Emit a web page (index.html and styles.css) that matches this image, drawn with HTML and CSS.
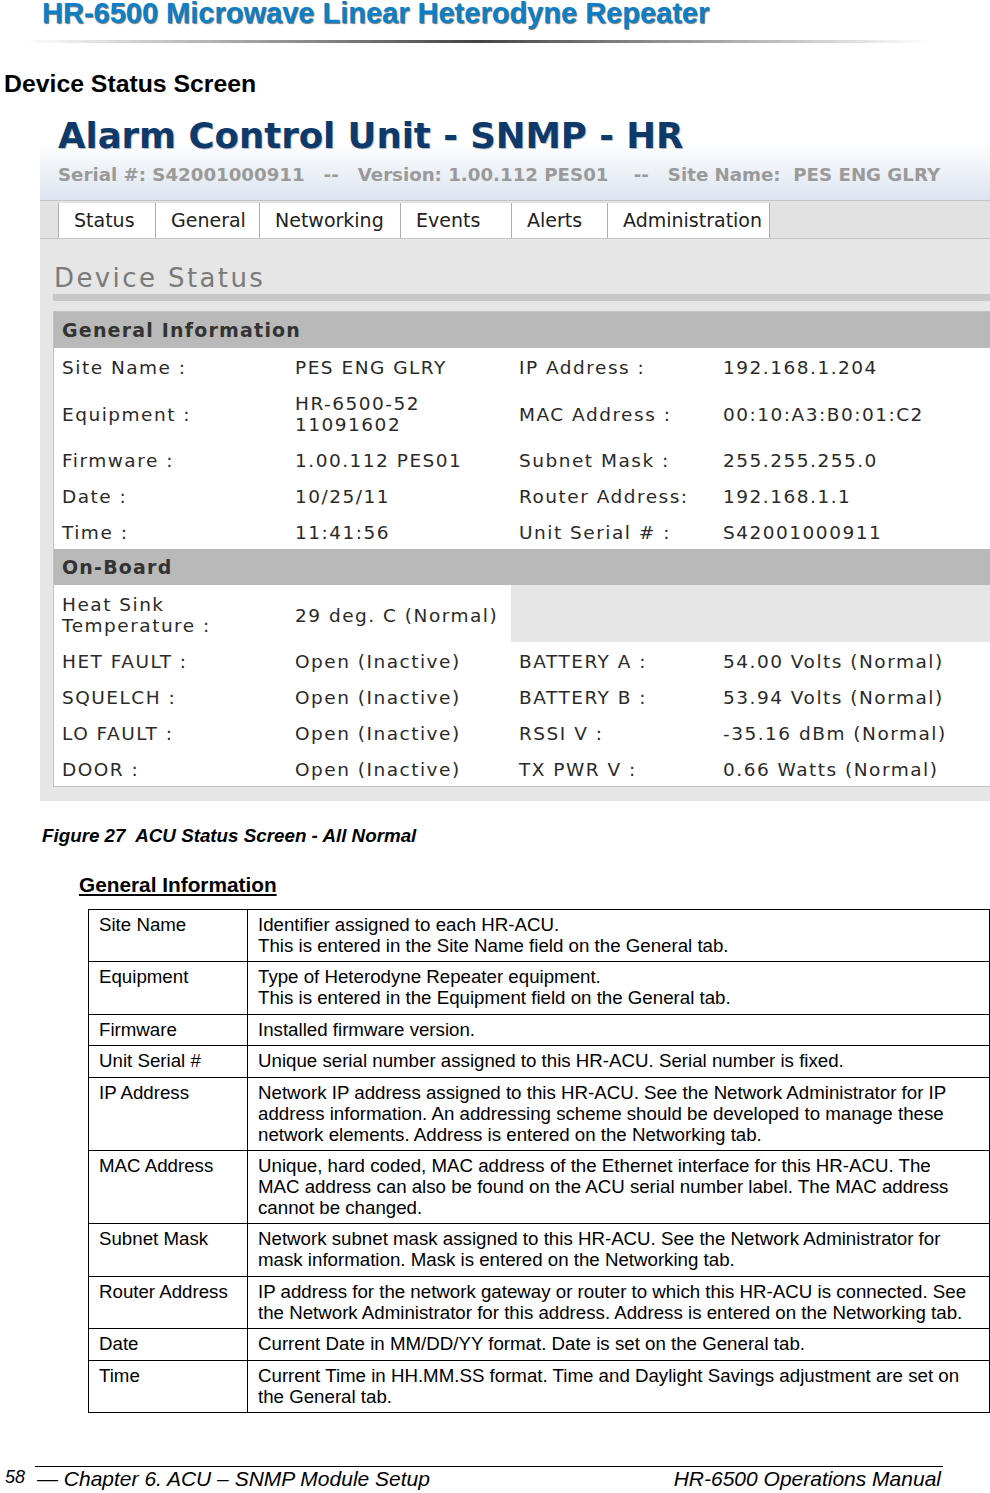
FILE: index.html
```html
<!DOCTYPE html>
<html lang="en">
<head>
    <meta charset="UTF-8">
    <meta name="viewport" content="width=device-width, initial-scale=1.0">
    <title>Device Status Screen</title>
    <link rel="stylesheet" href="styles.css">
</head>
<body>

<div class="page">
    <div class="doc-title">HR-6500 Microwave Linear Heterodyne Repeater</div>
    <div class="doc-rule"></div>

    <h1 class="section-title">Device Status Screen</h1>

    <!-- Screenshot of the ACU web page -->
    <div class="screen">
        <div class="acu-head">
            <div class="acu-title">Alarm Control Unit - SNMP - HR</div>
            <div class="acu-sub">Serial #: S42001000911   --   Version: 1.00.112 PES01    --   Site Name:  PES ENG GLRY</div>
        </div>

        <div class="tabs">
            <div class="tab">Status</div>
            <div class="tab">General</div>
            <div class="tab">Networking</div>
            <div class="tab">Events</div>
            <div class="tab">Alerts</div>
            <div class="tab">Administration</div>
        </div>

        <div class="status-body">
            <div class="status-title">Device Status</div>
            <div class="status-rule"></div>

            <div class="panel">
                <div class="panel-head">General Information</div>
                <div class="grid">
                    <div class="cell">Site Name :</div>
                    <div class="cell">PES ENG GLRY</div>
                    <div class="cell">IP Address :</div>
                    <div class="cell">192.168.1.204</div>

                    <div class="cell">Equipment :</div>
                    <div class="cell">HR-6500-52<br>11091602</div>
                    <div class="cell">MAC Address :</div>
                    <div class="cell">00:10:A3:B0:01:C2</div>

                    <div class="cell">Firmware :</div>
                    <div class="cell">1.00.112 PES01</div>
                    <div class="cell">Subnet Mask :</div>
                    <div class="cell">255.255.255.0</div>

                    <div class="cell">Date :</div>
                    <div class="cell">10/25/11</div>
                    <div class="cell">Router Address:</div>
                    <div class="cell">192.168.1.1</div>

                    <div class="cell">Time :</div>
                    <div class="cell">11:41:56</div>
                    <div class="cell">Unit Serial # :</div>
                    <div class="cell">S42001000911</div>
                </div>

                <div class="panel-head">On-Board</div>
                <div class="grid">
                    <div class="cell">Heat Sink<br>Temperature :</div>
                    <div class="cell">29 deg. C (Normal)</div>
                    <div class="cell empty"></div>
                    <div class="cell empty"></div>

                    <div class="cell">HET FAULT :</div>
                    <div class="cell">Open (Inactive)</div>
                    <div class="cell">BATTERY A :</div>
                    <div class="cell">54.00 Volts (Normal)</div>

                    <div class="cell">SQUELCH :</div>
                    <div class="cell">Open (Inactive)</div>
                    <div class="cell">BATTERY B :</div>
                    <div class="cell">53.94 Volts (Normal)</div>

                    <div class="cell">LO FAULT :</div>
                    <div class="cell">Open (Inactive)</div>
                    <div class="cell">RSSI V :</div>
                    <div class="cell">-35.16 dBm (Normal)</div>

                    <div class="cell">DOOR :</div>
                    <div class="cell">Open (Inactive)</div>
                    <div class="cell">TX PWR V :</div>
                    <div class="cell">0.66 Watts (Normal)</div>
                </div>
            </div>
        </div>
    </div>

    <p class="caption">Figure 27&nbsp; ACU Status Screen - All Normal</p>

    <h2 class="sub-title">General Information</h2>

    <table class="info">
        <tr>
            <td>Site Name</td>
            <td>Identifier assigned to each HR-ACU.<br>This is entered in the Site Name field on the General tab.</td>
        </tr>
        <tr>
            <td>Equipment</td>
            <td>Type of Heterodyne Repeater equipment.<br>This is entered in the Equipment field on the General tab.</td>
        </tr>
        <tr>
            <td>Firmware</td>
            <td>Installed firmware version.</td>
        </tr>
        <tr>
            <td>Unit Serial #</td>
            <td>Unique serial number assigned to this HR-ACU. Serial number is fixed.</td>
        </tr>
        <tr>
            <td>IP Address</td>
            <td>Network IP address assigned to this HR-ACU. See the Network Administrator for IP<br>address information. An addressing scheme should be developed to manage these<br>network elements. Address is entered on the Networking tab.</td>
        </tr>
        <tr>
            <td>MAC Address</td>
            <td>Unique, hard coded, MAC address of the Ethernet interface for this HR-ACU. The<br>MAC address can also be found on the ACU serial number label. The MAC address<br>cannot be changed.</td>
        </tr>
        <tr>
            <td>Subnet Mask</td>
            <td>Network subnet mask assigned to this HR-ACU. See the Network Administrator for<br>mask information. Mask is entered on the Networking tab.</td>
        </tr>
        <tr>
            <td>Router Address</td>
            <td>IP address for the network gateway or router to which this HR-ACU is connected. See<br>the Network Administrator for this address. Address is entered on the Networking tab.</td>
        </tr>
        <tr>
            <td>Date</td>
            <td>Current Date in MM/DD/YY format. Date is set on the General tab.</td>
        </tr>
        <tr>
            <td>Time</td>
            <td>Current Time in HH.MM.SS format. Time and Daylight Savings adjustment are set on<br>the General tab.</td>
        </tr>
    </table>

    <div class="footer">
        <span class="page-num">58</span>
        <div class="footer-line">
            <span>&mdash; Chapter 6. ACU &ndash; SNMP Module Setup</span>
            <span>HR-6500 Operations Manual</span>
        </div>
    </div>
</div>

</body>
</html>
```

FILE: styles.css
```css
body {
    margin: 0;
    padding: 0;
    background-color: #ffffff;
    font-family: "Liberation Sans", Arial, sans-serif;
    color: #000;
}
.page {
    width: 990px;
    overflow: hidden;
}

/* Manual header */
.doc-title {
    margin: 0 0 0 42px;
    font-size: 29px;
    line-height: 27px;
    font-weight: bold;
    color: #0b80c8;
    text-shadow: 1px 1px 1px #777;
}
.doc-rule {
    height: 3px;
    margin: 13px 60px 0 25px;
    background: linear-gradient(to right, rgba(60,60,60,0), #444 50%, rgba(60,60,60,0));
}
.section-title {
    margin: 27px 0 0 4px;
    font-size: 24.8px;
    line-height: 28px;
    font-weight: bold;
}

/* ACU screenshot */
.screen {
    margin: 12px 0 0 40px;
    font-family: "DejaVu Sans", Verdana, sans-serif;
    overflow: hidden;
}
.acu-head {
    padding: 6px 0 13px 18px;
    background: linear-gradient(#ffffff 35%, #dbe4ef);
}
.acu-title {
    font-size: 35.5px;
    line-height: 40px;
    font-weight: bold;
    color: #0d3a6b;
    text-shadow: 1px 1px 0 rgba(0,0,0,0.25);
}
.acu-sub {
    margin-top: 7px;
    font-size: 18.2px;
    line-height: 24px;
    font-weight: bold;
    color: #9a9a9a;
    white-space: pre;
}
.tabs {
    display: grid;
    grid-template-columns: 97px 104px 141px 111px 96px 163px;
    padding: 2px 0 0 18px;
    background-color: #e2e2e2;
    border-top: 1px solid #c4c4c4;
    border-bottom: 1px solid #c4c4c4;
}
.tab {
    background-color: #ffffff;
    border-left: 1px solid #b0b0b0;
    padding-left: 15px;
    font-size: 19px;
    line-height: 35px;
    color: #222;
}
.tab:last-child {
    border-right: 1px solid #b0b0b0;
}
.status-body {
    background-color: #e6e6e6;
    padding: 23px 0 14px 13px;
}
.status-title {
    padding-left: 1px;
    font-size: 26px;
    line-height: 32px;
    letter-spacing: 2.4px;
    color: #7a7a7a;
}
.status-rule {
    height: 7px;
    background-color: #c8c8c8;
}
.panel {
    margin-top: 10px;
    border: 1px solid #c2c2c2;
    border-right: none;
    background-color: #ffffff;
}
.panel-head {
    padding-left: 8px;
    background-color: #b9b9b9;
    font-size: 19px;
    line-height: 36px;
    font-weight: bold;
    letter-spacing: 1.2px;
    color: #333;
}
.grid {
    display: grid;
    grid-template-columns: 233px 224px 204px 1fr;
    align-items: center;
}
.cell {
    padding: 9px 0 6px 8px;
    font-size: 18.5px;
    line-height: 21px;
    letter-spacing: 1.5px;
    color: #2a2a2a;
    white-space: nowrap;
}
.cell.empty {
    align-self: stretch;
    background-color: #e6e6e6;
}

/* Manual text */
.caption {
    margin: 24px 0 0 42px;
    font-size: 18.8px;
    line-height: 22px;
    font-weight: bold;
    font-style: italic;
}
.sub-title {
    margin: 26px 0 0 79px;
    font-size: 20.8px;
    line-height: 24px;
    font-weight: bold;
    text-decoration: underline;
}
.info {
    margin: 12px 0 0 88px;
    width: 902px;
    border-collapse: collapse;
    font-size: 18.7px;
    line-height: 21px;
}
.info td {
    border: 1px solid #000;
    padding: 4px 10px 5.4px 10px;
    vertical-align: top;
    white-space: nowrap;
}
.info td:first-child {
    width: 138px;
}

/* Footer */
.footer {
    display: flex;
    align-items: flex-start;
    margin-top: 53px;
    padding-left: 5px;
    font-style: italic;
}
.page-num {
    width: 30px;
    margin-top: 1px;
    font-size: 18px;
    line-height: 20px;
}
.footer-line {
    flex: 1;
    display: flex;
    justify-content: space-between;
    margin-right: 47px;
    padding: 1px 2px 0 2px;
    border-top: 1px solid #000;
    font-size: 21px;
    line-height: 22px;
}
```
